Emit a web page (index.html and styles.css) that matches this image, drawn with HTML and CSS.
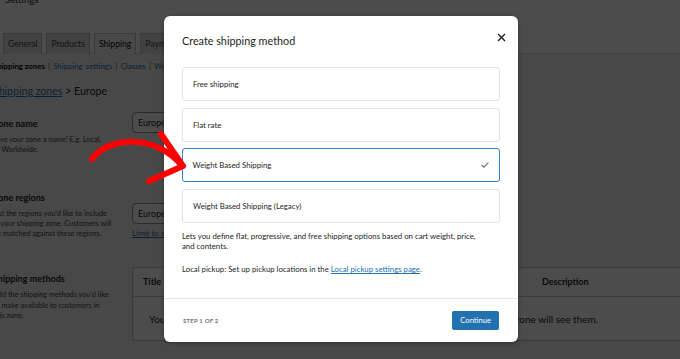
FILE: index.html
```html
<!DOCTYPE html>
<html>
<head>
<meta charset="utf-8">
<link rel="stylesheet" href="styles.css">
</head>
<body>
<div class="page">
  <header class="wc-header">
    <div class="wc-title">Settings</div>
    <nav class="tabs">
      <span class="tab">General</span>
      <span class="tab">Products</span>
      <span class="tab active">Shipping</span>
      <span class="tab">Payments</span>
      <span class="tab">Accounts &amp; Privacy</span>
    </nav>
  </header>
  <main class="content">
    <div class="subnav"><b>Shipping zones</b> | <a>Shipping settings</a> | <a>Classes</a> | <a>Weight Based Shipping</a></div>
    <h2 class="crumb"><a>Shipping zones</a> &gt; Europe</h2>

    <section class="row row-name">
      <div class="label-col">
        <h3>Zone name</h3>
        <p>Give your zone a name! E.g. Local,<br>or Worldwide.</p>
      </div>
      <div class="field-col">
        <div class="input">Europe</div>
      </div>
    </section>

    <section class="row row-regions">
      <div class="label-col">
        <h3>Zone regions</h3>
        <p>List the regions you'd like to include<br>in your shipping zone. Customers will<br>be matched against these regions.</p>
      </div>
      <div class="field-col">
        <div class="input input-regions">Europe</div>
        <a class="limit">Limit to specific ZIP/postcodes</a>
      </div>
    </section>

    <section class="row row-methods">
      <div class="label-col">
        <h3>Shipping methods</h3>
        <p>Add the shipping methods you'd like<br>to make available to customers in<br>this zone.</p>
      </div>
      <div class="field-col">
        <div class="table">
          <div class="thead"><span>Title</span><span>Description</span></div>
          <div class="tbody">You can add multiple shipping methods within this zone. Only customers within the zone will see them.</div>
        </div>
      </div>
    </section>
  </main>
</div>

<div class="overlay"></div>

<div class="modal">
  <div class="modal-head">
    <h1>Create shipping method</h1>
    <svg class="close" width="9" height="9" viewBox="0 0 9 9"><path d="M1 1 L8 8 M8 1 L1 8" stroke="#1e1e1e" stroke-width="1.4" fill="none"/></svg>
  </div>
  <div class="options">
    <div class="option">Free shipping</div>
    <div class="option">Flat rate</div>
    <div class="option selected">Weight Based Shipping
      <svg class="check" width="8" height="6" viewBox="0 0 8 6"><path d="M0.6 3.2 L2.8 5.2 L7.4 0.6" stroke="#757575" stroke-width="1.2" fill="none"/></svg>
    </div>
    <div class="option">Weight Based Shipping (Legacy)</div>
  </div>
  <p class="desc">Lets you define flat, progressive, and free shipping options based on cart weight, price,<br>and contents.</p>
  <p class="desc pickup">Local pickup: Set up pickup locations in the <a>Local pickup settings page</a>.</p>
  <div class="modal-foot">
    <span class="step">STEP 1 OF 2</span>
    <span class="btn">Continue</span>
  </div>
</div>

<svg class="arrow" width="680" height="359" viewBox="0 0 680 359">
  <path d="M92 159 C108 136, 158 134, 182 166" stroke="#ff0000" stroke-width="6" fill="none" stroke-linecap="round"/>
  <path d="M161 134 L183 166 L149 181" stroke="#ff0000" stroke-width="6" fill="none" stroke-linecap="round" stroke-linejoin="round"/>
</svg>
</body>
</html>
```

FILE: styles.css
```css
* { box-sizing: border-box; }
html, body { margin: 0; padding: 0; }
body {
  width: 680px;
  height: 359px;
  overflow: hidden;
  position: relative;
  background: #f0f0f1;
  font-family: Lato, "Noto Sans", sans-serif;
  color: #1d2327;
}
a { color: #2271b1; }

.page { width: 680px; }

.wc-header {
  background: #fff;
  height: 54px;
  border-bottom: 1px solid #dcdcde;
  display: flex;
  flex-direction: column;
  justify-content: space-between;
  padding-left: 3px;
}
.wc-title {
  font-size: 9.5px;
  line-height: 10px;
  margin-top: -5px;
  padding-left: 2px;
}
.tabs { display: flex; gap: 4px; margin-bottom: -1px; }
.tab {
  height: 21px;
  padding: 0 4px;
  background: #dcdcde;
  border: 1px solid #c3c4c7;
  border-bottom: none;
  font-size: 8.6px;
  line-height: 20px;
  color: #3c434a;
  white-space: nowrap;
}
.tab.active { background: #f0f0f1; color: #000; }

.content { margin-left: -7px; }
.subnav {
  font-size: 7.8px;
  line-height: 12px;
  margin-top: 6px;
  color: #50575e;
  white-space: nowrap;
  word-spacing: 1.2px;
}
.subnav b { color: #000; word-spacing: 0; }
.crumb {
  margin: 11px 0 0;
  font-size: 10.6px;
  line-height: 16px;
  font-weight: 400;
}
.crumb a { text-decoration: underline; }

.row { display: flex; }
.label-col { width: 139px; flex: none; }
.label-col h3 { margin: 0; font-size: 9px; line-height: 12px; font-weight: 700; }
.label-col p { margin: 5px 0 0; font-size: 7.3px; line-height: 10.3px; color: #3c434a; }
.field-col { flex: 1; }
.input {
  width: 120px;
  height: 21px;
  background: #fff;
  border: 1px solid #8c8f94;
  border-radius: 4px;
  font-size: 9px;
  line-height: 19px;
  padding-left: 5px;
}
.row-name { margin-top: 13px; }
.row-name .label-col { padding-top: 6px; }
.row-regions { margin-top: 36px; }
.row-regions .field-col { padding-top: 11px; }
.limit { display: block; font-size: 8px; line-height: 10px; margin-top: 4px; text-decoration: underline; }
.row-methods { margin-top: 28px; }
.row-methods .label-col { padding-top: 6px; }
.row-methods .field-col { margin-top: 0; }
.table {
  background: #fff;
  border: 1px solid #c3c4c7;
  border-right: none;
  height: 74px;
}
.thead {
  display: grid;
  grid-template-columns: 409px 1fr;
  height: 29px;
  border-bottom: 1px solid #c3c4c7;
  font-size: 9px;
  font-weight: 700;
  line-height: 28px;
}
.thead span:first-child { padding-left: 10px; }
.tbody {
  font-size: 10px;
  line-height: 44px;
  padding-left: 16px;
  white-space: nowrap;
}

.overlay {
  position: absolute;
  inset: 0;
  background: rgba(0, 0, 0, 0.7);
}

.modal {
  position: absolute;
  left: 164px;
  top: 16px;
  width: 354px;
  height: 326px;
  background: #fff;
  border-radius: 6px;
  box-shadow: 0 1px 4px rgba(0,0,0,.35);
  color: #1e1e1e;
  display: flex;
  flex-direction: column;
}
.modal-head {
  display: flex;
  justify-content: space-between;
  align-items: center;
  padding: 17px 12px 0 18px;
}
.modal-head h1 {
  margin: 0;
  font-size: 10.8px;
  line-height: 16px;
  font-weight: 400;
}
.close { margin-top: -8px; }
.options {
  display: flex;
  flex-direction: column;
  gap: 6.5px;
  padding: 0 18px;
  margin-top: 18px;
}
.option {
  height: 34px;
  border: 1px solid #e2e2e2;
  border-radius: 3px;
  padding: 0 10px;
  font-size: 7.8px;
  display: flex;
  align-items: center;
  justify-content: space-between;
}
.option.selected { border: 1.5px solid #3582c4; padding-left: 9.5px; }
.desc {
  margin: 8px 18px 0;
  font-size: 7.8px;
  line-height: 10.5px;
  white-space: nowrap;
}
.desc.pickup { margin-top: 12.5px; }
.desc a { text-decoration: underline; }
.modal-foot {
  margin-top: auto;
  height: 44px;
  border-top: 1px solid #e8e8e8;
  display: flex;
  align-items: center;
  justify-content: space-between;
  padding: 0 19px 0 19px;
}
.step {
  font-size: 6px;
  font-weight: 700;
  color: #757575;
  letter-spacing: 0.2px;
}
.btn {
  background: #2271b1;
  color: #fff;
  font-size: 7.6px;
  height: 19px;
  line-height: 19px;
  padding: 0 8px;
  border-radius: 2px;
}

.arrow {
  position: absolute;
  left: 0;
  top: 0;
}
```
